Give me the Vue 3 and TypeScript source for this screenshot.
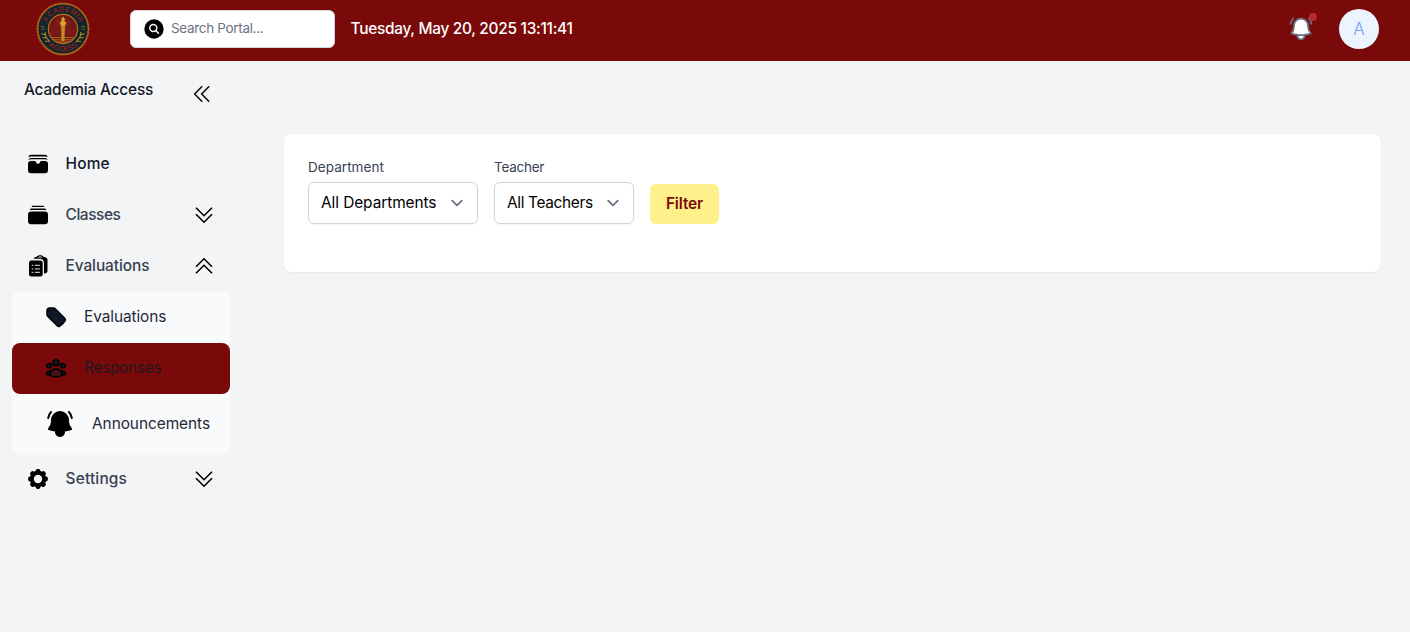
<script setup lang="ts">
interface NavRow { label: string; icon: string; arrow?: 'up' | 'down'; cls: string }

const topRows: NavRow[] = [
  { label: 'Home', icon: 'home', cls: 'home' },
  { label: 'Classes', icon: 'classes', arrow: 'down', cls: 'classes' },
  { label: 'Evaluations', icon: 'clipboard', arrow: 'up', cls: 'evals' },
]
const subRows: NavRow[] = [
  { label: 'Evaluations', icon: 'tag', cls: 'sub-evals' },
  { label: 'Responses', icon: 'people', cls: 'active' },
  { label: 'Announcements', icon: 'bell', cls: 'tall' },
]
const settings: NavRow[] = [{ label: 'Settings', icon: 'gear', arrow: 'down', cls: 'settings' }]
const filters = [
  { label: 'Department', value: 'All Departments', cls: 'dept' },
  { label: 'Teacher', value: 'All Teachers', cls: 'teacher' },
]
const rays = Array.from({ length: 16 }, (_, i) => i * 22.5 - 180)
const teeth = [0, 45, 90, 135, 180, 225, 270, 315]
</script>

<template>
  <div class="page">
    <header class="top">
      <svg class="logo" viewBox="0 0 54 54">
        <defs>
          <path id="arcTop" d="M9.600 27a17.400 17.400 0 0 1 34.800 0" />
          <path id="arcBottom" d="M4.700 27a22.300 22.300 0 0 0 44.600 0" />
        </defs>
        <circle cx="27" cy="27" r="25.300" fill="#10262d" stroke="#a65d12" stroke-width="1.500" />
        <circle cx="27" cy="27" r="25.900" fill="none" stroke="#b87318" stroke-width="1" stroke-dasharray="2 1.200" />
        <circle cx="27" cy="27" r="14.600" fill="#6f1714" stroke="#b87318" stroke-width="1.200" />
        <path v-for="r in rays" :key="r" d="M27 22V14" :transform="`rotate(${r} 27 22)`" stroke="#983019" stroke-width=".8" />
        <path d="M14 30h26v3H14zM15 26h4v4h-4zM20 24h4v6h-4zM30 24h4v6h-4zM35 26h4v4h-4z" fill="#7a171b" />
        <path d="M15 35.500h24M17 37.700h20M20 39.900h14" stroke="#a96516" stroke-width="1.100" />
        <path d="M25 23h4l-.6 16h-2.800z" fill="#c48a26" />
        <path d="M23.800 20h6.400l-1 3.500h-4.400z" fill="#e0a63a" />
        <path d="M27 14.500c2.500 2.500 2 4.500 1 6h-2c-1.500-2-.5-4 1-6z" fill="#d9a436" />
        <path d="M5.500 31.500l3.500 1.500M6.500 35.500l4 .5M9 39.500l4-.5M9 30l1 5 4 5M48.500 31.500L45 33M47.500 35.500l-4 .5M45 39.500l-4-.5M45 30l-1 5-4 5" stroke="#b98120" stroke-width="1.100" fill="none" />
        <path d="M5 24.500h3.500M5 27h3.500M45.500 24.500H49M45.500 27H49" stroke="#95651d" stroke-width=".9" />
        <text class="seal"><textPath href="#arcTop" startOffset="50%" text-anchor="middle">ACADEMIA</textPath></text>
        <text class="seal"><textPath href="#arcBottom" startOffset="50%" text-anchor="middle">ACCESS</textPath></text>
      </svg>
      <div class="search">
        <svg width="20" height="20" viewBox="0 0 20 20">
          <circle cx="10" cy="10" r="9.700" />
          <circle cx="9.300" cy="9" r="3.500" fill="none" stroke="#fff" stroke-width="1.400" />
          <path d="M11.800 11.500l2.600 2.700" stroke="#fff" stroke-width="1.500" stroke-linecap="round" />
        </svg>
        <span>Search Portal...</span>
      </div>
      <div class="date">Tuesday, May 20, 2025 13:11:41</div>
      <div class="alert">
        <svg width="28" height="28" viewBox="0 0 24 24" fill="#fff" stroke="#6b7280" stroke-width="1.500" stroke-linecap="round" stroke-linejoin="round">
          <path d="M14.857 17.082a23.848 23.848 0 0 0 5.454-1.310A8.967 8.967 0 0 1 18 9.750V9A6 6 0 0 0 6 9v.75a8.967 8.967 0 0 1-2.312 6.022c1.733.64 3.560 1.085 5.455 1.310m5.714 0a24.255 24.255 0 0 1-5.714 0m5.714 0a3 3 0 1 1-5.714 0" />
          <path d="M3.124 7.500A8.969 8.969 0 0 1 5.292 3m13.416 0a8.969 8.969 0 0 1 2.168 4.500" fill="none" />
        </svg>
        <i class="dot"></i>
      </div>
      <div class="avatar">A</div>
    </header>

    <div class="body">
      <aside>
        <div class="brand">
          <span>Academia Access</span>
          <svg width="24" height="24" viewBox="0 0 24 24" fill="none" stroke="#111" stroke-width="1.600"><path d="M12.200 4.200L4.700 12l7.500 7.800M19.200 4.200L11.700 12l7.500 7.800" /></svg>
        </div>
        <nav>
          <template v-for="(group, g) in [topRows, subRows, settings]" :key="g">
            <div :class="g === 1 ? 'submenu' : 'group'">
              <div v-for="row in group" :key="row.label" class="row" :class="row.cls">
                <svg class="icon" viewBox="0 0 24 24">
                  <template v-if="row.icon === 'home'">
                    <path d="M2.300 5.100Q2.700 2.700 5 2.700h14q2.300 0 2.700 2.400Q20.600 4.400 19 4.400H5q-1.600 0-2.700.7zM2.300 8.100Q2.800 5.900 5 5.900h14q2.200 0 2.700 2.200Q20.600 7.300 19 7.300H5q-1.600 0-2.700.8z" />
                    <path d="M5 8.900h3.800c.8 0 .9.700 1.300 1.500.8 1.700 3 1.700 3.800 0 .4-.8.500-1.500 1.300-1.500H19a3 3 0 0 1 3 3v6.400a3 3 0 0 1-3 3H5a3 3 0 0 1-3-3v-6.400a3 3 0 0 1 3-3z" />
                  </template>
                  <template v-else-if="row.icon === 'classes'">
                    <path d="M6.300 2.700h11.400l.8 1.400h-13zM4.800 5.600h14.400l1.300 1.500h-17z" />
                    <rect x="2" y="8.500" width="20" height="12.800" rx="3.200" />
                  </template>
                  <template v-else-if="row.icon === 'clipboard'">
                    <path d="M7.500 4.700c.8-1.400 1.800-1.800 3-1.800C11.200.8 17 .8 17.700 2.900 20.500 2.900 21.500 4.200 21.500 6v10.500c0 2-.8 3-3.500 3.100V9.500c0-3.500-1.600-4.800-5-4.800zM12 3.500h4.200c-.5-1.200-3.700-1.200-4.200 0z" fill-rule="evenodd" />
                    <rect x="3" y="6.500" width="13.700" height="16" rx="2.300" />
                    <path d="M5.700 11.300h1.600M8.800 11.300h5M5.700 14.900h1.600M8.800 14.900h5M5.700 18.400h1.600M8.800 18.400h5" stroke="#bbb" stroke-width="1.300" />
                  </template>
                  <template v-else-if="row.icon === 'tag'">
                    <path class="ink" d="M9.568 3H5.250A2.250 2.250 0 0 0 3 5.250v4.318c0 .597.237 1.170.659 1.591l9.581 9.581c.699.699 1.780.872 2.607.33a18.095 18.095 0 0 0 5.223-5.223c.542-.827.369-1.908-.33-2.607L11.160 3.660A2.250 2.250 0 0 0 9.568 3z" />
                    <path class="ink" d="M6 6h.008v.008H6z" />
                  </template>
                  <template v-else-if="row.icon === 'people'">
                    <path class="ink" d="M6.300 18.700a9 9 0 0 1-4-.5 3 3 0 0 1 4.700-2.700M17.700 18.700a9 9 0 0 0 4-.5 3 3 0 0 0-4.700-2.700" />
                    <path class="ink torso" d="M6 18.720a6 6 0 0 1 12 0v.7A11.944 11.944 0 0 1 12 21c-2.170 0-4.207-.576-5.963-1.584z" />
                    <circle class="ink" cx="12" cy="6.750" r="3" />
                    <circle class="ink" cx="5.250" cy="9.750" r="2.250" />
                    <circle class="ink" cx="18.750" cy="9.750" r="2.250" />
                  </template>
                  <template v-else-if="row.icon === 'bell'">
                    <path class="bellpath" d="M14.857 17.082a23.848 23.848 0 0 0 5.454-1.310A8.967 8.967 0 0 1 18 9.750V9A6 6 0 0 0 6 9v.75a8.967 8.967 0 0 1-2.312 6.022c1.733.64 3.560 1.085 5.455 1.310a3 3 0 1 0 5.714 0z" />
                    <path class="bellpath open" d="M3.124 7.500A8.969 8.969 0 0 1 5.292 3m13.416 0a8.969 8.969 0 0 1 2.168 4.500" />
                  </template>
                  <template v-else>
                    <rect v-for="t in teeth" :key="t" x="9.600" y="2.100" width="4.800" height="5" rx="1.800" :transform="`rotate(${t} 12 12)`" />
                    <circle cx="12" cy="12" r="6.200" fill="none" stroke="#000" stroke-width="4" />
                  </template>
                </svg>
                <span class="label">{{ row.label }}</span>
                <svg v-if="row.arrow" class="arrow" viewBox="0 0 24 24" fill="none" stroke="#000" stroke-width="1.600">
                  <path v-if="row.arrow === 'down'" d="M4 4.700l8 8 8-8M4 11.200l8 8 8-8" />
                  <path v-else d="M4 12.800l8-8 8 8M4 19.300l8-8 8 8" />
                </svg>
              </div>
            </div>
          </template>
        </nav>
      </aside>

      <main>
        <section class="card">
          <div v-for="f in filters" :key="f.label" class="field" :class="f.cls">
            <label>{{ f.label }}</label>
            <div class="select">
              <span>{{ f.value }}</span>
              <svg width="24" height="24" viewBox="0 0 20 20" fill="none" stroke="#6b7280" stroke-width="1.500" stroke-linecap="round" stroke-linejoin="round"><path d="M6 8l4 4 4-4" /></svg>
            </div>
          </div>
          <button>Filter</button>
        </section>
      </main>
    </div>
  </div>
</template>

<style scoped>
.page {
  height: 632px;
  overflow: hidden;
  background: #f3f4f6;
  font-family: Inter, "Liberation Sans", sans-serif;
  font-size: 15.400px;
  line-height: 24px;
  color: #111827;
}
.page span, .page label, .date { white-space: nowrap; }
.top { display: flex; align-items: center; height: 61px; padding: 0 31px 4px 36px; box-sizing: border-box; background: #7a0a0a; }
.logo { width: 54px; height: 54px; margin-right: 40px; }
.seal { font: 700 7.600px "Liberation Sans", sans-serif; letter-spacing: .1px; fill: #8c1b20; }
.search { display: flex; align-items: center; width: 205px; height: 38px; box-sizing: border-box; padding: 0 0 1px 13px; gap: 7px; border: 1px solid #d1d5db; border-radius: 6px; background: #fff; color: #6b7280; font-size: 13.500px; letter-spacing: -.33px; margin-right: 15.500px; }
.search svg { position: relative; top: .5px; }
.date { color: #fff; font-weight: 450; letter-spacing: -.27px; }
.alert { position: relative; width: 28px; height: 28px; margin-left: auto; margin-right: 24px; }
.alert svg { display: block; }
.dot { position: absolute; top: -2px; right: -2px; width: 8px; height: 8px; border-radius: 50%; background: #b92c2c; }
.avatar { width: 40px; height: 40px; border-radius: 50%; background: #ebf4ff; color: #7f9cf5; display: grid; place-items: center; font-size: 17px; font-weight: 300; }
.body { display: flex; height: 571px; }
aside { width: 218px; padding: 0 12px; flex: none; }
.brand { display: flex; justify-content: space-between; align-items: flex-start; height: 77px; padding: 17px 16px 0 12px; box-sizing: border-box; font-weight: 500; letter-spacing: -.17px; }
.brand svg { margin-top: 4px; }
.row { display: flex; align-items: center; height: 51px; box-sizing: border-box; padding: 0 14px; color: #374151; font-weight: 500; }
.icon { width: 24px; height: 24px; margin-right: 15.500px; flex: none; }
.arrow { width: 24px; height: 24px; margin-left: auto; }
.home { color: #111827; letter-spacing: .2px; }
.classes { letter-spacing: -.4px; }
.evals { letter-spacing: -.06px; }
.settings { letter-spacing: .2px; }
.submenu { margin-top: 1px; background: #f9fafb; border-radius: 6px; }
.submenu .row { padding: 0 0 1px 32px; color: #1f2937; font-weight: 380; letter-spacing: -.08px; border-radius: 8px; }
.submenu .icon { margin-right: 16px; }
.submenu .active { background: #7a0a0a; color: #1f1720; letter-spacing: -.27px; }
.submenu .tall { height: 59px; padding-bottom: 0; letter-spacing: -.04px; }
.submenu .tall .icon { width: 32px; height: 32px; }
.ink { fill: #111827; stroke: #000; stroke-width: 1.500; stroke-linecap: round; stroke-linejoin: round; }
.ink.torso { fill: #41151b; }
.bellpath { fill: #000; stroke: #000; stroke-width: 1.500; stroke-linecap: round; stroke-linejoin: round; }
.bellpath.open { fill: none; }
main { flex: 1; padding: 73px 29px 0 42px; }
.card { display: flex; align-items: flex-start; gap: 16px; height: 138px; padding: 24px; box-sizing: border-box; background: #fff; border-radius: 8px; box-shadow: 0 1px 2px rgba(0, 0, 0, .05); }
.field label { display: block; height: 20px; line-height: 18px; margin-bottom: 4px; font-size: 13.500px; color: #374151; letter-spacing: .05px; }
.select { display: flex; align-items: center; justify-content: space-between; width: 170px; height: 42px; padding: 0 8px 0 12px; box-sizing: border-box; border: 1px solid #d1d5db; border-radius: 6px; box-shadow: 0 1px 2px rgba(0, 0, 0, .05); color: #000; letter-spacing: -.06px; }
.teacher label { letter-spacing: -.25px; }
.teacher .select { width: 140px; letter-spacing: -.33px; }
button { width: 69px; height: 40px; margin-top: 26px; padding: 0 0 1px; border: 0; border-radius: 6px; background: #fef08a; color: #7a0a0a; font: 600 15.400px Inter, sans-serif; letter-spacing: -.1px; }
</style>
